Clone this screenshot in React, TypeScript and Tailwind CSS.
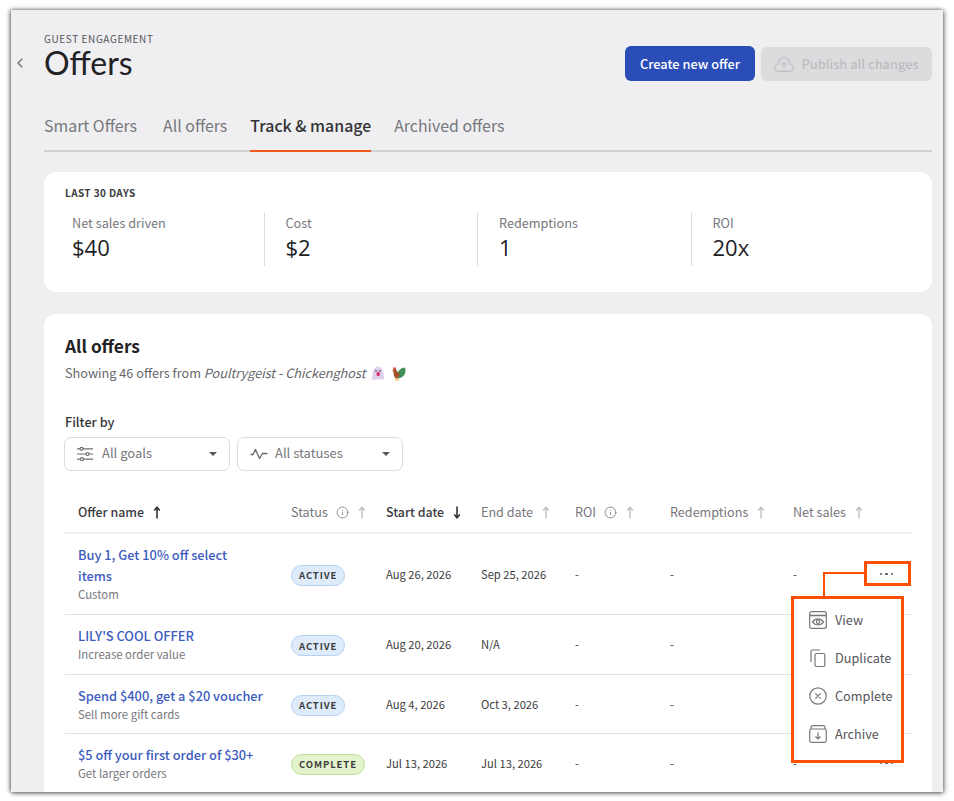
import { ChevronLeft, Info } from "lucide-react";

const sans = "font-['Noto_Sans_CJK_SC','Noto_Sans',sans-serif]";
const cols = "grid grid-cols-[213px_95px_95px_94px_95px_123px_1fr]";

const rows = [
  { name: "Buy 1, Get 10% off select\nitems", goal: "Custom", status: "ACTIVE", start: "Aug 26, 2026", end: "Sep 25, 2026", h: "h-[81px]" },
  { name: "LILY'S COOL OFFER", goal: "Increase order value", status: "ACTIVE", start: "Aug 20, 2026", end: "N/A", h: "h-[60px]" },
  { name: "Spend $400, get a $20 voucher", goal: "Sell more gift cards", status: "ACTIVE", start: "Aug 4, 2026", end: "Oct 3, 2026", h: "h-[59px]" },
  { name: "$5 off your first order of $30+", goal: "Get larger orders", status: "COMPLETE", start: "Jul 13, 2026", end: "Jul 13, 2026", h: "h-[59px]" },
];

const Sliders = () => (
  <svg width="16" height="14" viewBox="0 0 16 14" fill="none" stroke="#6f6f74" strokeWidth="1.2">
    <path d="M0 1.800h16M0 7h16M0 12.200h16" />
    <circle cx="4.500" cy="1.800" r="1.500" fill="#fff" />
    <circle cx="10.500" cy="7" r="1.500" fill="#fff" />
    <circle cx="5" cy="12.200" r="1.500" fill="#fff" />
  </svg>
);

const Pulse = () => (
  <svg width="18" height="12" viewBox="0 0 18 12" fill="none" stroke="#66666b" strokeWidth="1.300" strokeLinejoin="round">
    <path d="M0.500 6.500h2.500L5.500 1.500l4 9 3-5h5" />
  </svg>
);

const Caret = () => <span className="h-0 w-0 border-x-[4.5px] border-t-[4.5px] border-x-transparent border-t-[#55555a]" />;

const Ghost = () => (
  <svg width="14" height="15" viewBox="0 0 14 15">
    <path d="M0.500 14C1.500 10 1.500 7 2 5 2.800 2 5 .5 7 .5s4.200 1.500 5 4.500c.500 2.500.800 5 1.500 8.500-1.200.300-1.800-.500-2.500-.500s-1 .800-2 .800-1.500-.800-2.300-.800-1.200.800-2 .800-1.400-.500-2.200-.300-1.300.800-2 .500z" fill="#dfd0ec" />
    <circle cx="5" cy="4.800" r=".900" fill="#5d4a66" />
    <circle cx="9" cy="4.800" r=".900" fill="#5d4a66" />
    <ellipse cx="7.200" cy="8" rx="1.700" ry="2.200" fill="#d82a6b" />
  </svg>
);

const Rooster = () => (
  <svg width="15" height="15" viewBox="0 0 15 15">
    <path d="M7 6c1.500-2.500 3-4 7-4.500 1 2.500.5 6-1.500 8.500C10 12 7 13 5 12 3 10.500 3 8 3.500 6z" fill="#3f8f57" />
    <path d="M2 3.500C3 2.500 5 2.500 5.500 4c.500 2 1.500 3 3.500 3.500-.300 2.500-2 4.500-4 4.500C3 12 2.500 8 2.500 5.500z" fill="#a3502a" />
    <path d="M2.500 1l1 .800.800-.800.500 2-2.500.500z" fill="#d8352a" />
    <path d="M2 4L.500 5l1.700.500z" fill="#e9a13b" />
    <path d="M5 12v2.500M7 12v2.500" stroke="#e9a13b" strokeWidth="1.200" />
  </svg>
);

const CloudUp = () => (
  <svg width="20" height="17" viewBox="0 0 22 18" fill="none" stroke="#bcbcc0" strokeWidth="1.200" strokeLinecap="round" strokeLinejoin="round">
    <path d="M6 16.500H5a4 4 0 0 1-.500-8C5 4 8 1 11 1s6 3 6.500 7.500a4 4 0 0 1-.500 8h-1z" />
    <path d="M6 16.500h10M11 12.500V7M8.800 9.200 11 7l2.200 2.200" />
  </svg>
);

const ViewIcon = () => (
  <svg width="18" height="18" viewBox="0 0 18 18" fill="none" stroke="#77777c" strokeWidth="1.200">
    <rect x="0.700" y="0.700" width="16.600" height="16.600" rx="2" />
    <path d="M0.700 4.500h16.600" strokeWidth="1.600" />
    <path d="M3.500 10.800c1.400-2 3.300-3 5.500-3s4.100 1 5.500 3c-1.400 2-3.300 3-5.500 3s-4.100-1-5.500-3z" />
    <circle cx="9" cy="10.800" r="1.700" />
  </svg>
);

const DuplicateIcon = () => (
  <svg width="16" height="18" viewBox="0 0 16 18" fill="none" stroke="#77777c" strokeWidth="1.200">
    <rect x="5" y="4.500" width="9.800" height="13" rx="1.500" />
    <path d="M1 13V2.500A1.500 1.500 0 0 1 2.500 1H10" />
  </svg>
);

const CompleteIcon = () => (
  <svg width="18" height="18" viewBox="0 0 18 18" fill="none" stroke="#77777c" strokeWidth="1.200" strokeLinecap="round">
    <circle cx="9" cy="9" r="8.200" />
    <path d="M6.700 6.700l4.600 4.600M11.300 6.700l-4.600 4.600" />
  </svg>
);

const ArchiveIcon = () => (
  <svg width="18" height="18" viewBox="0 0 18 18" fill="none" stroke="#77777c" strokeWidth="1.200">
    <path d="M2 4V2.500A1.800 1.800 0 0 1 3.800.700h10.400A1.800 1.800 0 0 1 16 2.500V4" />
    <rect x="0.700" y="4" width="16.600" height="13.300" rx="1.800" />
    <path d="M9 7.500v6.500M6.500 11.500 9 14l2.500-2.500" />
  </svg>
);

// sort arrows are narrower than lucide's, small head on a long stem
function SortArrow({ down, color, width = 1.3 }: { down?: boolean; color: string; width?: number }) {
  return (
    <svg width="10" height="13" viewBox="0 0 10 13" fill="none" stroke={color} strokeWidth={width} className={down ? "rotate-180" : ""}>
      <path d="M5 12.500V1.500M2.200 4.500 5 1.300l2.800 3.200" />
    </svg>
  );
}

function Dots() {
  return (
    <span className="flex gap-[3px]">
      <span className="h-[2.500px] w-[2.500px] rounded-full bg-[#55555a]" />
      <span className="h-[2.500px] w-[2.500px] rounded-full bg-[#55555a]" />
      <span className="h-[2.500px] w-[2.500px] rounded-full bg-[#55555a]" />
    </span>
  );
}

function Head({ label, info, sort }: { label: string; info?: boolean; sort?: "up" | "down" }) {
  return (
    <div className="flex items-center pl-[13px]">
      <span className={`whitespace-nowrap ${sort ? "text-[12.400px] font-medium text-[#3c3c40]" : "text-[12.600px] text-[#77777c]"}`}>{label}</span>
      {info && <Info className="ml-[8px] text-[#77777c]" size={13} strokeWidth={1.500} />}
      {sort && <span className="ml-[8px]"><SortArrow down={sort === "down"} color="#333336" width={1.6} /></span>}
      {!sort && <span className="ml-[8px]"><SortArrow color="#bcbcc0" /></span>}
    </div>
  );
}

export default function App() {
  return (
    <div className={`h-[801px] w-[954px] overflow-hidden bg-white pl-[11px] pt-[10px] ${sans}`}>
      <div className="relative h-[782px] w-[932px] overflow-hidden bg-[#efeff1] pl-[33px] pr-[11px] shadow-[-1px_0_4px_rgba(0,0,0,0.5),1px_1px_5px_rgba(0,0,0,0.5)]">
        <ChevronLeft className="absolute left-px top-[45px] text-[#66666b]" size={16} strokeWidth={1.600} />

        <div className="flex h-[104px] items-start justify-between">
          <div className="pt-[23px]">
            <div className="text-[10px] leading-[12px] tracking-[0.6px] text-[#55555a]">GUEST ENGAGEMENT</div>
            <h1 className="font-['Lato',sans-serif] text-[32px] leading-[36px] text-[#222225]">Offers</h1>
          </div>
          <div className="flex gap-[6px] pt-[36px]">
            <button className="flex h-[35px] w-[130px] items-center justify-center rounded-[6px] bg-[#2a4db7] text-[12.800px] font-medium text-white">Create new offer</button>
            <button className="mt-[1px] flex h-[34px] w-[171px] items-center justify-center gap-[7px] rounded-[6px] bg-[#dcdcde] text-[12.800px] font-medium text-[#bcbcc0]">
              <CloudUp />
              Publish all changes
            </button>
          </div>
        </div>

        <div className="flex h-[38px] gap-[23px] border-b-2 border-[#d2d2d5] text-[15.900px] leading-[24px] text-[#77777c]">
          <span className="mr-[3px] h-[38px]">Smart Offers</span>
          <span className="h-[38px]">All offers</span>
          <span className="h-[38px] border-b-2 border-[#f2591f] font-medium text-[#333336]">Track &amp; manage</span>
          <span className="h-[38px]">Archived offers</span>
        </div>

        <section className="mt-[20px] h-[120px] rounded-[12px] bg-white pl-[21px] pt-[14px]">
          <div className="text-[10px] font-bold leading-[13px] tracking-[0.4px] text-[#3c3c40]">LAST 30 DAYS</div>
          <div className="mt-[14px] grid grid-cols-[198.500px_213.500px_213.500px_1fr]">
            {[["Net sales driven", "$40"], ["Cost", "$2"], ["Redemptions", "1"], ["ROI", "20x"]].map(([label, value], i) => (
              <div key={label} className={`h-[53px] ${i === 0 ? "pl-[7px]" : "border-l border-[#dcdcde] pl-[21px]"}`}>
                <div className="text-[12.700px] leading-[20px] text-[#77777c]">{label}</div>
                <div className="-mt-px font-['Open_Sans',sans-serif] text-[22px] leading-[30px] text-[#222225]">{value}</div>
              </div>
            ))}
          </div>
        </section>

        <section className="relative mt-[22px] h-[600px] rounded-[12px] bg-white px-[21px] pt-[19px]">
          <h2 className="text-[17.300px] font-bold leading-[26px] text-[#222225]">All offers</h2>
          <p className="mt-[4px] flex items-center text-[12.700px] leading-[20px] text-[#66666b]">
            Showing 46 offers from&nbsp;<i>Poultrygeist - Chickenghost</i>
            <span className="ml-[6px] flex gap-[6px]"><Ghost /><Rooster /></span>
          </p>

          <div className="mt-[29px] text-[12.700px] font-medium leading-[20px] text-[#333336]">Filter by</div>
          <div className="-ml-px mt-[5px] flex gap-[7px]">
            <div className="flex h-[34px] w-[166px] items-center rounded-[7px] border border-[#dcdcde] px-[12px] text-[13px] text-[#77777c]">
              <Sliders />
              <span className="ml-[9px] flex-1 pb-[2px]">All goals</span>
              <Caret />
            </div>
            <div className="flex h-[34px] w-[166px] items-center rounded-[7px] border border-[#dcdcde] px-[12px] text-[13px] text-[#77777c]">
              <Pulse />
              <span className="ml-[7px] flex-1 pb-[2px]">All statuses</span>
              <Caret />
            </div>
          </div>

          <div className={`${cols} mt-[23px] h-[40px] border-b-2 border-[#efeff1] pb-[2px]`}>
            <Head label="Offer name" sort="up" />
            <Head label="Status" info />
            <Head label="Start date" sort="down" />
            <Head label="End date" />
            <Head label="ROI" info />
            <Head label="Redemptions" />
            <Head label="Net sales" />
          </div>

          {rows.map((r, i) => (
            <div key={r.name} className={`${cols} ${r.h} items-center border-b border-[#e2e2e4]`}>
              <div className="pb-px pl-[13px]">
                <div className="whitespace-pre-line text-[12.800px] font-medium leading-[21px] text-[#3d5cc0]">{r.name}</div>
                <div className="text-[11.400px] leading-[17px] text-[#77777c]">{r.goal}</div>
              </div>
              <div className="pb-[2px] pl-[13px]">
                <span className={`inline-flex h-[21px] items-center rounded-full border px-[7px] text-[9.500px] font-bold tracking-[0.9px] text-[#3c3c40] ${r.status === "ACTIVE" ? "border-[#b5d1f2] bg-[#deebfa]" : "border-[#bfe096] bg-[#e3f4cc]"}`}>{r.status}</span>
              </div>
              <div className="pl-[13px] text-[11.200px] text-[#3c3c40]">{r.start}</div>
              <div className="pl-[13px] text-[11.200px] text-[#3c3c40]">{r.end}</div>
              <div className="pl-[13px] text-[11.200px] text-[#3c3c40]">-</div>
              <div className="pl-[13px] text-[11.200px] text-[#3c3c40]">-</div>
              <div className="flex items-center justify-between pl-[13px] pr-[18px] text-[11.200px] text-[#3c3c40]">
                <span>-</span>
                {(i === 0 || i === 3) && <Dots />}
              </div>
            </div>
          ))}
        </section>

        {/* orange callouts sit on top of the table */}
        <div className="absolute left-[853px] top-[551px] h-[25px] w-[47px] border-[3px] border-[#fa5000]" />
        <div className="absolute left-[812px] top-[562px] h-[25px] w-[42px] border-l-[2px] border-t-[2px] border-[#fa5000]" />
        <div className="absolute left-[780px] top-[586px] h-[167px] w-[113px] border-[3px] border-[#fa5000] bg-white pl-[15px] pt-[2px] text-[12.700px] text-[#55555a]">
          <div className="flex h-[38px] items-center gap-[8px]"><ViewIcon /><span>View</span></div>
          <div className="flex h-[38px] items-center gap-[8px]"><span className="mx-px"><DuplicateIcon /></span><span>Duplicate</span></div>
          <div className="flex h-[38px] items-center gap-[8px]"><CompleteIcon /><span>Complete</span></div>
          <div className="flex h-[38px] items-center gap-[8px]"><ArchiveIcon /><span>Archive</span></div>
        </div>
      </div>
    </div>
  );
}
